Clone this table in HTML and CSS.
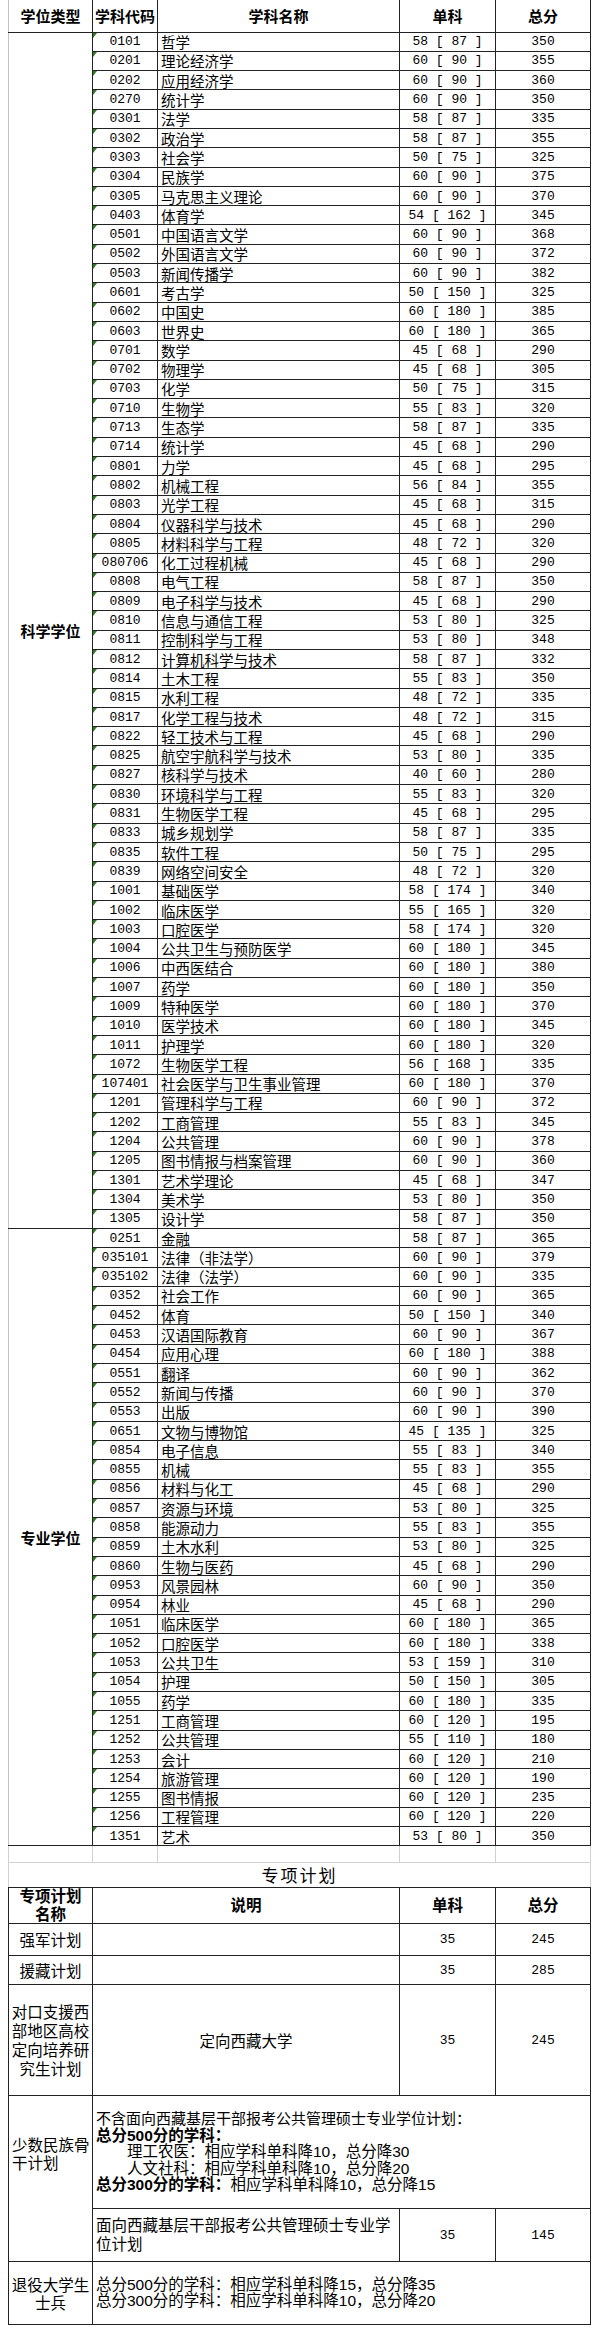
FILE: index.html
```html
<!DOCTYPE html>
<html lang="zh-CN">
<head>
<meta charset="utf-8">
<title>复试基本分数线</title>
<link rel="stylesheet" href="styles.css">
</head>
<body>
<table class="sheet">
<colgroup>
<col class="w1"><col class="w2"><col class="w3"><col class="w4"><col class="w5">
</colgroup>
<tbody>
<tr class="head">
<td class="hd first">学位类型</td><td class="hd">学科代码</td><td class="hd">学科名称</td><td class="hd">单科</td><td class="hd">总分</td>
</tr>
<tr class="r"><td class="type" rowspan="62">科学学位</td><td class="cd">0101</td><td class="nm">哲学</td><td class="sg">58 [ 87 ]</td><td class="tt">350</td></tr>
<tr class="r"><td class="cd">0201</td><td class="nm">理论经济学</td><td class="sg">60 [ 90 ]</td><td class="tt">355</td></tr>
<tr class="r"><td class="cd">0202</td><td class="nm">应用经济学</td><td class="sg">60 [ 90 ]</td><td class="tt">360</td></tr>
<tr class="r"><td class="cd">0270</td><td class="nm">统计学</td><td class="sg">60 [ 90 ]</td><td class="tt">350</td></tr>
<tr class="r"><td class="cd">0301</td><td class="nm">法学</td><td class="sg">58 [ 87 ]</td><td class="tt">335</td></tr>
<tr class="r"><td class="cd">0302</td><td class="nm">政治学</td><td class="sg">58 [ 87 ]</td><td class="tt">355</td></tr>
<tr class="r"><td class="cd">0303</td><td class="nm">社会学</td><td class="sg">50 [ 75 ]</td><td class="tt">325</td></tr>
<tr class="r"><td class="cd">0304</td><td class="nm">民族学</td><td class="sg">60 [ 90 ]</td><td class="tt">375</td></tr>
<tr class="r"><td class="cd">0305</td><td class="nm">马克思主义理论</td><td class="sg">60 [ 90 ]</td><td class="tt">370</td></tr>
<tr class="r"><td class="cd">0403</td><td class="nm">体育学</td><td class="sg">54 [ 162 ]</td><td class="tt">345</td></tr>
<tr class="r"><td class="cd">0501</td><td class="nm">中国语言文学</td><td class="sg">60 [ 90 ]</td><td class="tt">368</td></tr>
<tr class="r"><td class="cd">0502</td><td class="nm">外国语言文学</td><td class="sg">60 [ 90 ]</td><td class="tt">372</td></tr>
<tr class="r"><td class="cd">0503</td><td class="nm">新闻传播学</td><td class="sg">60 [ 90 ]</td><td class="tt">382</td></tr>
<tr class="r"><td class="cd">0601</td><td class="nm">考古学</td><td class="sg">50 [ 150 ]</td><td class="tt">325</td></tr>
<tr class="r"><td class="cd">0602</td><td class="nm">中国史</td><td class="sg">60 [ 180 ]</td><td class="tt">385</td></tr>
<tr class="r"><td class="cd">0603</td><td class="nm">世界史</td><td class="sg">60 [ 180 ]</td><td class="tt">365</td></tr>
<tr class="r"><td class="cd">0701</td><td class="nm">数学</td><td class="sg">45 [ 68 ]</td><td class="tt">290</td></tr>
<tr class="r"><td class="cd">0702</td><td class="nm">物理学</td><td class="sg">45 [ 68 ]</td><td class="tt">305</td></tr>
<tr class="r"><td class="cd">0703</td><td class="nm">化学</td><td class="sg">50 [ 75 ]</td><td class="tt">315</td></tr>
<tr class="r"><td class="cd">0710</td><td class="nm">生物学</td><td class="sg">55 [ 83 ]</td><td class="tt">320</td></tr>
<tr class="r"><td class="cd">0713</td><td class="nm">生态学</td><td class="sg">58 [ 87 ]</td><td class="tt">335</td></tr>
<tr class="r"><td class="cd">0714</td><td class="nm">统计学</td><td class="sg">45 [ 68 ]</td><td class="tt">290</td></tr>
<tr class="r"><td class="cd">0801</td><td class="nm">力学</td><td class="sg">45 [ 68 ]</td><td class="tt">295</td></tr>
<tr class="r"><td class="cd">0802</td><td class="nm">机械工程</td><td class="sg">56 [ 84 ]</td><td class="tt">355</td></tr>
<tr class="r"><td class="cd">0803</td><td class="nm">光学工程</td><td class="sg">45 [ 68 ]</td><td class="tt">315</td></tr>
<tr class="r"><td class="cd">0804</td><td class="nm">仪器科学与技术</td><td class="sg">45 [ 68 ]</td><td class="tt">290</td></tr>
<tr class="r"><td class="cd">0805</td><td class="nm">材料科学与工程</td><td class="sg">48 [ 72 ]</td><td class="tt">320</td></tr>
<tr class="r"><td class="cd">080706</td><td class="nm">化工过程机械</td><td class="sg">45 [ 68 ]</td><td class="tt">290</td></tr>
<tr class="r"><td class="cd">0808</td><td class="nm">电气工程</td><td class="sg">58 [ 87 ]</td><td class="tt">350</td></tr>
<tr class="r"><td class="cd">0809</td><td class="nm">电子科学与技术</td><td class="sg">45 [ 68 ]</td><td class="tt">290</td></tr>
<tr class="r"><td class="cd">0810</td><td class="nm">信息与通信工程</td><td class="sg">53 [ 80 ]</td><td class="tt">325</td></tr>
<tr class="r"><td class="cd">0811</td><td class="nm">控制科学与工程</td><td class="sg">53 [ 80 ]</td><td class="tt">348</td></tr>
<tr class="r"><td class="cd">0812</td><td class="nm">计算机科学与技术</td><td class="sg">58 [ 87 ]</td><td class="tt">332</td></tr>
<tr class="r"><td class="cd">0814</td><td class="nm">土木工程</td><td class="sg">55 [ 83 ]</td><td class="tt">350</td></tr>
<tr class="r"><td class="cd">0815</td><td class="nm">水利工程</td><td class="sg">48 [ 72 ]</td><td class="tt">335</td></tr>
<tr class="r"><td class="cd">0817</td><td class="nm">化学工程与技术</td><td class="sg">48 [ 72 ]</td><td class="tt">315</td></tr>
<tr class="r"><td class="cd">0822</td><td class="nm">轻工技术与工程</td><td class="sg">45 [ 68 ]</td><td class="tt">290</td></tr>
<tr class="r"><td class="cd">0825</td><td class="nm">航空宇航科学与技术</td><td class="sg">53 [ 80 ]</td><td class="tt">335</td></tr>
<tr class="r"><td class="cd">0827</td><td class="nm">核科学与技术</td><td class="sg">40 [ 60 ]</td><td class="tt">280</td></tr>
<tr class="r"><td class="cd">0830</td><td class="nm">环境科学与工程</td><td class="sg">55 [ 83 ]</td><td class="tt">320</td></tr>
<tr class="r"><td class="cd">0831</td><td class="nm">生物医学工程</td><td class="sg">45 [ 68 ]</td><td class="tt">295</td></tr>
<tr class="r"><td class="cd">0833</td><td class="nm">城乡规划学</td><td class="sg">58 [ 87 ]</td><td class="tt">335</td></tr>
<tr class="r"><td class="cd">0835</td><td class="nm">软件工程</td><td class="sg">50 [ 75 ]</td><td class="tt">295</td></tr>
<tr class="r"><td class="cd">0839</td><td class="nm">网络空间安全</td><td class="sg">48 [ 72 ]</td><td class="tt">320</td></tr>
<tr class="r"><td class="cd">1001</td><td class="nm">基础医学</td><td class="sg">58 [ 174 ]</td><td class="tt">340</td></tr>
<tr class="r"><td class="cd">1002</td><td class="nm">临床医学</td><td class="sg">55 [ 165 ]</td><td class="tt">320</td></tr>
<tr class="r"><td class="cd">1003</td><td class="nm">口腔医学</td><td class="sg">58 [ 174 ]</td><td class="tt">320</td></tr>
<tr class="r"><td class="cd">1004</td><td class="nm">公共卫生与预防医学</td><td class="sg">60 [ 180 ]</td><td class="tt">345</td></tr>
<tr class="r"><td class="cd">1006</td><td class="nm">中西医结合</td><td class="sg">60 [ 180 ]</td><td class="tt">380</td></tr>
<tr class="r"><td class="cd">1007</td><td class="nm">药学</td><td class="sg">60 [ 180 ]</td><td class="tt">350</td></tr>
<tr class="r"><td class="cd">1009</td><td class="nm">特种医学</td><td class="sg">60 [ 180 ]</td><td class="tt">370</td></tr>
<tr class="r"><td class="cd">1010</td><td class="nm">医学技术</td><td class="sg">60 [ 180 ]</td><td class="tt">345</td></tr>
<tr class="r"><td class="cd">1011</td><td class="nm">护理学</td><td class="sg">60 [ 180 ]</td><td class="tt">320</td></tr>
<tr class="r"><td class="cd">1072</td><td class="nm">生物医学工程</td><td class="sg">56 [ 168 ]</td><td class="tt">335</td></tr>
<tr class="r"><td class="cd">107401</td><td class="nm">社会医学与卫生事业管理</td><td class="sg">60 [ 180 ]</td><td class="tt">370</td></tr>
<tr class="r"><td class="cd">1201</td><td class="nm">管理科学与工程</td><td class="sg">60 [ 90 ]</td><td class="tt">372</td></tr>
<tr class="r"><td class="cd">1202</td><td class="nm">工商管理</td><td class="sg">55 [ 83 ]</td><td class="tt">345</td></tr>
<tr class="r"><td class="cd">1204</td><td class="nm">公共管理</td><td class="sg">60 [ 90 ]</td><td class="tt">378</td></tr>
<tr class="r"><td class="cd">1205</td><td class="nm">图书情报与档案管理</td><td class="sg">60 [ 90 ]</td><td class="tt">360</td></tr>
<tr class="r"><td class="cd">1301</td><td class="nm">艺术学理论</td><td class="sg">45 [ 68 ]</td><td class="tt">347</td></tr>
<tr class="r"><td class="cd">1304</td><td class="nm">美术学</td><td class="sg">53 [ 80 ]</td><td class="tt">350</td></tr>
<tr class="r"><td class="cd">1305</td><td class="nm">设计学</td><td class="sg">58 [ 87 ]</td><td class="tt">350</td></tr>
<tr class="r"><td class="type" rowspan="32">专业学位</td><td class="cd">0251</td><td class="nm">金融</td><td class="sg">58 [ 87 ]</td><td class="tt">365</td></tr>
<tr class="r"><td class="cd">035101</td><td class="nm">法律（非法学）</td><td class="sg">60 [ 90 ]</td><td class="tt">379</td></tr>
<tr class="r"><td class="cd">035102</td><td class="nm">法律（法学）</td><td class="sg">60 [ 90 ]</td><td class="tt">335</td></tr>
<tr class="r"><td class="cd">0352</td><td class="nm">社会工作</td><td class="sg">60 [ 90 ]</td><td class="tt">365</td></tr>
<tr class="r"><td class="cd">0452</td><td class="nm">体育</td><td class="sg">50 [ 150 ]</td><td class="tt">340</td></tr>
<tr class="r"><td class="cd">0453</td><td class="nm">汉语国际教育</td><td class="sg">60 [ 90 ]</td><td class="tt">367</td></tr>
<tr class="r"><td class="cd">0454</td><td class="nm">应用心理</td><td class="sg">60 [ 180 ]</td><td class="tt">388</td></tr>
<tr class="r"><td class="cd">0551</td><td class="nm">翻译</td><td class="sg">60 [ 90 ]</td><td class="tt">362</td></tr>
<tr class="r"><td class="cd">0552</td><td class="nm">新闻与传播</td><td class="sg">60 [ 90 ]</td><td class="tt">370</td></tr>
<tr class="r"><td class="cd">0553</td><td class="nm">出版</td><td class="sg">60 [ 90 ]</td><td class="tt">390</td></tr>
<tr class="r"><td class="cd">0651</td><td class="nm">文物与博物馆</td><td class="sg">45 [ 135 ]</td><td class="tt">325</td></tr>
<tr class="r"><td class="cd">0854</td><td class="nm">电子信息</td><td class="sg">55 [ 83 ]</td><td class="tt">340</td></tr>
<tr class="r"><td class="cd">0855</td><td class="nm">机械</td><td class="sg">55 [ 83 ]</td><td class="tt">355</td></tr>
<tr class="r"><td class="cd">0856</td><td class="nm">材料与化工</td><td class="sg">45 [ 68 ]</td><td class="tt">290</td></tr>
<tr class="r"><td class="cd">0857</td><td class="nm">资源与环境</td><td class="sg">53 [ 80 ]</td><td class="tt">325</td></tr>
<tr class="r"><td class="cd">0858</td><td class="nm">能源动力</td><td class="sg">55 [ 83 ]</td><td class="tt">355</td></tr>
<tr class="r"><td class="cd">0859</td><td class="nm">土木水利</td><td class="sg">53 [ 80 ]</td><td class="tt">325</td></tr>
<tr class="r"><td class="cd">0860</td><td class="nm">生物与医药</td><td class="sg">45 [ 68 ]</td><td class="tt">290</td></tr>
<tr class="r"><td class="cd">0953</td><td class="nm">风景园林</td><td class="sg">60 [ 90 ]</td><td class="tt">350</td></tr>
<tr class="r"><td class="cd">0954</td><td class="nm">林业</td><td class="sg">45 [ 68 ]</td><td class="tt">290</td></tr>
<tr class="r"><td class="cd">1051</td><td class="nm">临床医学</td><td class="sg">60 [ 180 ]</td><td class="tt">365</td></tr>
<tr class="r"><td class="cd">1052</td><td class="nm">口腔医学</td><td class="sg">60 [ 180 ]</td><td class="tt">338</td></tr>
<tr class="r"><td class="cd">1053</td><td class="nm">公共卫生</td><td class="sg">53 [ 159 ]</td><td class="tt">310</td></tr>
<tr class="r"><td class="cd">1054</td><td class="nm">护理</td><td class="sg">50 [ 150 ]</td><td class="tt">305</td></tr>
<tr class="r"><td class="cd">1055</td><td class="nm">药学</td><td class="sg">60 [ 180 ]</td><td class="tt">335</td></tr>
<tr class="r"><td class="cd">1251</td><td class="nm">工商管理</td><td class="sg">60 [ 120 ]</td><td class="tt">195</td></tr>
<tr class="r"><td class="cd">1252</td><td class="nm">公共管理</td><td class="sg">55 [ 110 ]</td><td class="tt">180</td></tr>
<tr class="r"><td class="cd">1253</td><td class="nm">会计</td><td class="sg">60 [ 120 ]</td><td class="tt">210</td></tr>
<tr class="r"><td class="cd">1254</td><td class="nm">旅游管理</td><td class="sg">60 [ 120 ]</td><td class="tt">190</td></tr>
<tr class="r"><td class="cd">1255</td><td class="nm">图书情报</td><td class="sg">60 [ 120 ]</td><td class="tt">235</td></tr>
<tr class="r"><td class="cd">1256</td><td class="nm">工程管理</td><td class="sg">60 [ 120 ]</td><td class="tt">220</td></tr>
<tr class="r"><td class="cd">1351</td><td class="nm">艺术</td><td class="sg">53 [ 80 ]</td><td class="tt">350</td></tr>
<tr class="blank"><td></td><td></td><td></td><td></td><td></td></tr>
<tr class="title"><td colspan="5">专项计划</td></tr>
<tr class="head2">
<td class="h2 col1"><div class="stack">专项计划</div><div class="stack">名称</div></td><td class="h2" colspan="2">说明</td><td class="h2">单科</td><td class="h2">总分</td>
</tr>
<tr class="qj"><td class="lab">强军计划</td><td colspan="2"></td><td class="num">35</td><td class="num">245</td></tr>
<tr class="yz"><td class="lab">援藏计划</td><td colspan="2"></td><td class="num">35</td><td class="num">285</td></tr>
<tr class="dk"><td class="lab multi">对口支援西<br>部地区高校<br>定向培养研<br>究生计划</td><td class="cen" colspan="2">定向西藏大学</td><td class="num">35</td><td class="num">245</td></tr>
<tr class="ss"><td class="lab left nb-bottom">少数民族骨<br>干计划</td><td class="desc" colspan="4">
<div class="line1">不含面向西藏基层干部报考公共管理硕士专业学位计划：</div>
<div><b>总分500分的学科：</b></div>
<div class="ind">理工农医：相应学科单科降10，总分降30</div>
<div class="ind">人文社科：相应学科单科降10，总分降20</div>
<div><b>总分300分的学科：</b>相应学科单科降10，总分降15</div>
</td></tr>
<tr class="mx"><td class="lab nb-top"></td><td class="desc wrap" colspan="2">面向西藏基层干部报考公共管理硕士专业学位计划</td><td class="num">35</td><td class="num">145</td></tr>
<tr class="ty"><td class="lab multi">退役大学生<br>士兵</td><td class="desc" colspan="4">
<div>总分500分的学科：相应学科单科降15，总分降35</div>
<div>总分300分的学科：相应学科单科降10，总分降20</div>
</td></tr>
</tbody>
</table>
</body>
</html>
```

FILE: styles.css
```css
html, body {
  margin: 0;
  padding: 0;
  background: #ffffff;
}

body {
  font-family: "Liberation Sans", "Noto Sans CJK SC", sans-serif;
  color: #000000;
  height: 2337px;
}

.sheet {
  border-collapse: collapse;
  table-layout: fixed;
  width: 582px;
  margin: 0 0 0 8px;
}

.w1 { width: 84px; }
.w2 { width: 65px; }
.w3 { width: 242px; }
.w4 { width: 96px; }
.w5 { width: 95px; }

.sheet td {
  padding: 0;
  border: 1px solid #222222;
  vertical-align: middle;
  white-space: nowrap;
}

/* header row */
.head { height: 32px; }
.head td { border-top: none; }
.hd {
  font-family: "Noto Sans CJK SC", sans-serif;
  font-weight: 700;
  font-size: 15px;
  line-height: 18px;
  text-align: center;
}
.sheet td.hd.first { border-left: 1px solid #c4c4c4; }

/* data rows */
.r { height: 19.3px; }
.r td { line-height: 17px; }

.type {
  font-family: "Noto Sans CJK SC", sans-serif;
  font-weight: 700;
  font-size: 15px;
  text-align: center;
}
.sheet td.type { border-left: 1px solid #c4c4c4; }

.cd {
  position: relative;
  font-family: "Liberation Mono", monospace;
  font-size: 13px;
  text-align: center;
}
.cd::before {
  content: "";
  position: absolute;
  left: 0;
  top: 0;
  width: 0;
  height: 0;
  border-top: 5px solid #2f7a22;
  border-right: 4px solid transparent;
}

.sheet td.nm {
  font-family: "Noto Sans CJK SC", sans-serif;
  font-size: 14.5px;
  text-align: left;
  padding-left: 3px;
}

.sheet td.sg, .sheet td.tt {
  font-family: "Liberation Mono", monospace;
  font-size: 13px;
  text-align: center;
  white-space: pre;
}

/* blank spacer row */
.blank { height: 17px; }
.sheet .blank td { border: 1px solid #d2d2d2; }

/* title row */
.title { height: 25px; }
.sheet .title td {
  font-family: "Noto Sans CJK SC", sans-serif;
  font-size: 17px;
  letter-spacing: 2px;
  line-height: 22px;
  text-align: center;
  border-top: 1px solid #d2d2d2;
  border-left: 1px solid #d2d2d2;
  border-right: 1px solid #d2d2d2;
  border-bottom: 1px solid #222222;
}

/* special plan header */
.head2 { height: 36px; }
.h2 {
  font-family: "Liberation Sans", "Noto Sans CJK SC", sans-serif;
  font-weight: 700;
  font-size: 15.5px;
  line-height: 17.5px;
  text-align: center;
}
.h2 .stack {
  height: 17.5px;
  line-height: 17.5px;
}

.qj { height: 32px; }
.yz { height: 29px; }
.dk { height: 111px; }
.ss { height: 113px; }
.mx { height: 53px; }
.ty { height: 63px; }

.lab {
  font-family: "Noto Sans CJK SC", sans-serif;
  font-size: 15.5px;
  line-height: 19px;
  text-align: center;
}
.sheet td.lab.left {
  text-align: left;
  padding-left: 3px;
  line-height: 18px;
}
.lab.multi { line-height: 19px; }
.ty .lab.multi { line-height: 18px; }

.cen {
  font-family: "Noto Sans CJK SC", sans-serif;
  font-size: 15.5px;
  text-align: center;
}

.num {
  font-family: "Liberation Mono", monospace;
  font-size: 13px;
  text-align: center;
}

.sheet td.desc {
  font-family: "Liberation Sans", "Noto Sans CJK SC", sans-serif;
  font-size: 15.5px;
  line-height: 16.4px;
  text-align: left;
  padding-left: 3px;
}
.desc b { font-weight: 700; }
.desc .line1 { font-size: 15px; }
.desc .ind { padding-left: 31px; }
.sheet td.desc.wrap {
  white-space: normal;
  line-height: 19px;
}
.ty .desc { line-height: 18px; }

.sheet td.nb-bottom { border-bottom: none; }
.sheet td.nb-top { border-top: none; }
```
